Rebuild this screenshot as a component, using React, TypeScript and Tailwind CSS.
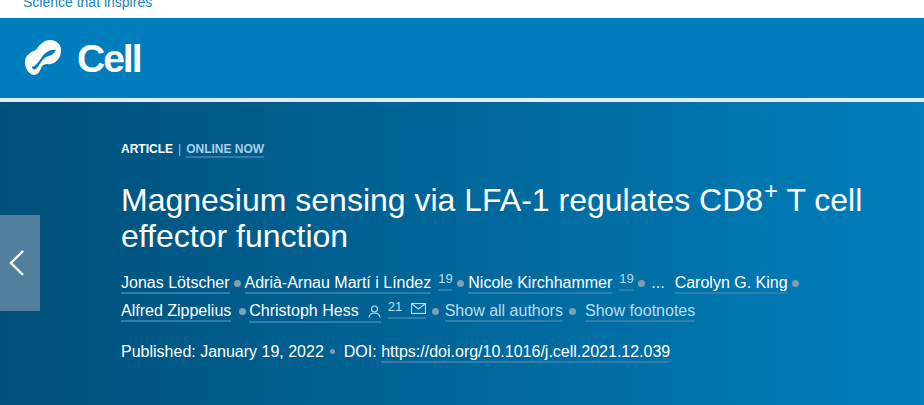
import React from "react";

const font = { fontFamily: '"Liberation Sans", Arial, sans-serif' };

const Dot = () => <span className="mx-[4px] inline-block h-[7px] w-[7px] rounded-full bg-[#7f9db4] align-[1px]" />;

const Author = ({ name }: { name: string }) => (
  <a className="border-b-2 border-[#2f7fae] pb-px text-white">{name}</a>
);

const Sup = ({ n }: { n: string }) => (
  <a className="ml-[7px] mr-px inline-block h-[22px] w-[14px] border-b-2 border-[#2f7fae] pt-[2px] text-[13px] leading-[16px] text-[#bcdcf0] align-top">{n}</a>
);

const Logo = () => (
  <svg width="37" height="37" viewBox="0 0 37 37" fill="none" className="shrink-0">
    <path d="M0 22 C0 15 6 12 11 10 C14 5 19 0 25 0 C32 0 37 5 36 12 C35 20 29 25 22 24 C20 24 18 25 17 26 C15 31 13 35 9 35 C3 34 0 28 0 22 Z" fill="#fff" />
    <path d="M7 27 C12 25 14 21 17 17 C20 13 25 9 31 10 C29 14 25 16 21 17 C17 19 15 25 11 29 C9 30 7 29 7 27 Z" fill="#007dbc" />
  </svg>
);

export default function App() {
  return (
    <div className="flex h-[405px] w-[924px] flex-col overflow-hidden bg-white" style={font}>
      <div className="h-[18px] shrink-0 overflow-hidden pl-[23px]">
        <p className="-mt-[6px] text-[14px] leading-[16px] text-[#1a82bb]">Science that inspires</p>
      </div>

      <header className="flex h-[80px] shrink-0 items-center gap-[15px] bg-[#007dbc] pl-[25px]">
        <Logo />
        <span className="text-[39px] leading-none font-bold tracking-[-2px] text-white">Cell</span>
      </header>
      <div className="h-1 shrink-0 bg-[#e4eaee]" />

      <section className="relative flex-1 bg-gradient-to-r from-[#00507a] to-[#007fbc] pl-[121px] text-white">
        <button className="absolute top-[113px] left-0 flex h-[96px] w-10 items-center justify-center bg-[#51809f]">
          <svg width="16" height="28" viewBox="0 0 16 28" fill="none" stroke="#fff" strokeWidth="2.4" className="-ml-[8px]">
            <path d="M15 2 L3 14 L15 26" />
          </svg>
        </button>

        <div className="pt-[39px] text-[12px] leading-[16px] font-bold">
          <span>ARTICLE</span>
          <span className="mx-[5px] font-normal text-[#9cc6e0]">|</span>
          <a className="border-b-2 border-[#2f7fae] text-[#a9cfe6]">ONLINE NOW</a>
        </div>

        <h1 className="mt-[25px] text-[32px] leading-[36px] font-normal">
          Magnesium sensing via LFA-1 regulates CD8<sup className="ml-px text-[24px] leading-none">+</sup> T cell
          <br />
          effector function
        </h1>

        <div className="mt-[15px] text-[16px] leading-[28px] whitespace-nowrap">
          <div>
            <Author name="Jonas Lötscher" />
            <Dot />
            <Author name="Adrià-Arnau Martí i Líndez" />
            <Sup n="19" />
            <Dot />
            <Author name="Nicole Kirchhammer" />
            <Sup n="19" />
            <Dot />
            <span className="ml-[2px]">...</span>
            <span className="ml-[10px]"><Author name="Carolyn G. King" /></span>
            <Dot />
          </div>
          <div>
            <Author name="Alfred Zippelius" />
            <span className="mr-[3px] ml-[8px] inline-block h-[7px] w-[7px] rounded-full bg-[#7f9db4] align-[1px]" />
            <a className="inline-flex items-center gap-[9px] border-b-2 border-[#2f7fae] leading-[20px]">
              Christoph Hess
              <svg width="13" height="13" viewBox="0 0 13 13" fill="none" stroke="#bcdcf0" strokeWidth="1.2">
                <circle cx="6.5" cy="4" r="3" />
                <path d="M1 12.5 C1.5 9 4 8 6.5 8 C9 8 11.5 9 12 12.5" />
              </svg>
            </a>
            <a className="relative ml-[7px] inline-block h-[22px] w-[38px] border-b-2 border-[#2f7fae] pt-[2px] text-[13px] leading-[16px] text-[#bcdcf0] align-top">
              21
              <svg width="15" height="11" viewBox="0 0 15 11" fill="none" stroke="#bcdcf0" strokeWidth="1.2" className="absolute top-[6px] right-0">
                <rect x="0.5" y="0.5" width="14" height="10" />
                <path d="M1 1 L7.5 6 L14 1" />
              </svg>
            </a>
            <span className="mx-[6px] inline-block h-[7px] w-[7px] rounded-full bg-[#7f9db4] align-[1px]" />
            <a className="border-b-2 border-[#2f7fae] pb-px text-[#bcdcf0]">Show all authors</a>
            <span className="mx-[6px] inline-block h-[7px] w-[7px] rounded-full bg-[#7f9db4] align-[1px]" />
            <a className="ml-[3px] border-b-2 border-[#2f7fae] pb-px text-[#bcdcf0]">Show footnotes</a>
          </div>
        </div>

        <div className="mt-[15px] text-[16px] leading-[24px] whitespace-nowrap">
          <span>Published: January 19, 2022</span>
          <span className="mx-[6px] inline-block h-[5px] w-[5px] rounded-full bg-[#7f9db4] align-[3px]" />
          <span className="ml-[3px]">DOI: </span>
          <a className="border-b-2 border-[#2f7fae] pb-px">https://doi.org/10.1016/j.cell.2021.12.039</a>
        </div>
      </section>
    </div>
  );
}
